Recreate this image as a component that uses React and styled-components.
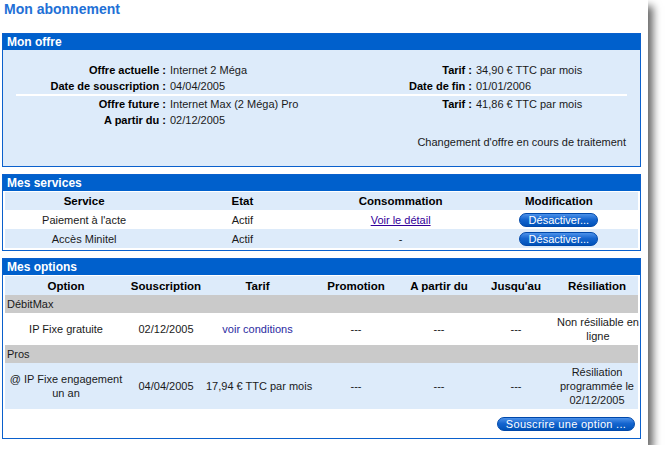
import React from 'react';
import styled, { createGlobalStyle } from 'styled-components';

const GlobalStyle = createGlobalStyle`
  html, body {
    margin: 0;
    padding: 0;
    background: #fff;
  }
  body {
    font-family: "Liberation Sans", Arial, sans-serif;
    font-size: 11px;
    color: #1a1a1a;
  }
`;

const Frame = styled.div`
  width: 648px;
  height: 445px;
  box-sizing: border-box;
  padding: 1px 0 0 2px;
  background: #fff;
  box-shadow: 5px 6px 8px rgba(0, 0, 0, 0.6);
`;

const Title = styled.h1`
  margin: 0 0 16px 2px;
  height: 16px;
  line-height: 16px;
  font-size: 14px;
  font-weight: bold;
  color: #2270d6;
`;

const Panel = styled.section`
  width: 639px;
  box-sizing: border-box;
  border: 1px solid #0a60cc;
  background: ${(p) => (p.$tint ? '#ddebfa' : '#fff')};
  margin-bottom: 7px;
`;

const PanelTitle = styled.h2`
  margin: 0;
  height: 16px;
  line-height: 16px;
  padding-left: 4px;
  background: #0060cc;
  color: #fff;
  font-size: 12px;
  font-weight: bold;
`;

/* Mon offre */
const OfferBody = styled.div`
  padding: 12px 0 16px;
`;

const OfferGrid = styled.div`
  display: grid;
  grid-template-columns: 163px 170px 128px 1fr;
  column-gap: 4px;
  grid-auto-rows: 16px;
  line-height: 16px;
`;

const Label = styled.span`
  text-align: right;
  font-weight: bold;
  color: #000;
  white-space: nowrap;
`;

const Value = styled.span`
  white-space: nowrap;
`;

const Divider = styled.div`
  height: 2px;
  margin: 0 13px;
  background: #fff;
`;

const Note = styled.div`
  margin-top: 6px;
  height: 16px;
  line-height: 16px;
  text-align: right;
  padding-right: 14px;
`;

/* Tables */
const TableBody = styled.div`
  padding: 1px 2px ${(p) => (p.$flush ? 0 : 2)}px;
`;

const Row = styled.div`
  display: grid;
  grid-template-columns: ${(p) => p.$cols};
  align-items: center;
  min-height: ${(p) => p.$h || 19}px;
  background: ${(p) => (p.$tint ? '#ddebfa' : '#fff')};
  line-height: 14px;
`;

const HeadCell = styled.div`
  text-align: center;
  font-weight: bold;
  font-size: 11.5px;
  color: #000;
`;

const Cell = styled.div`
  text-align: center;
  padding: 2px 1px;
  white-space: ${(p) => (p.$nowrap ? 'nowrap' : 'normal')};
`;

const GroupRow = styled.div`
  background: #cacaca;
  height: 18px;
  line-height: 18px;
  padding-left: 2px;
`;

const DetailLink = styled.a`
  color: ${(p) => (p.$plain ? '#2a2aa0' : '#330099')};
  text-decoration: ${(p) => (p.$plain ? 'none' : 'underline')};
  cursor: pointer;
`;

const PillButton = styled.button`
  display: inline-block;
  height: 14px;
  width: ${(p) => p.$w}px;
  padding: 0;
  border: 1px solid #0048aa;
  border-radius: 8px;
  background: linear-gradient(#4d92ea 0%, #1565cf 45%, #0052b8 100%);
  color: #fff;
  font-family: "Liberation Sans", Arial, sans-serif;
  font-size: 11px;
  line-height: 12px;
  letter-spacing: ${(p) => p.$ls || 0}px;
  cursor: pointer;
`;

const ButtonBar = styled.div`
  display: flex;
  justify-content: flex-end;
  padding: 8px 5px 7px 0;
`;

const serviceCols = 'repeat(4, 1fr)';
const optionCols = '122px 78px 105px 92px 74px 80px 1fr';

const services = [
  { name: "Paiement à l'acte", etat: 'Actif', conso: 'link' },
  { name: 'Accès Minitel', etat: 'Actif', conso: '-' },
];

const options = [
  {
    group: 'DébitMax',
    name: ['IP Fixe gratuite'],
    date: '02/12/2005',
    tarif: 'link',
    resil: ['Non résiliable en', 'ligne'],
    h: 32,
  },
  {
    group: 'Pros',
    name: ['@ IP Fixe engagement', 'un an'],
    date: '04/04/2005',
    tarif: '17,94 € TTC par mois',
    resil: ['Résiliation', 'programmée le', '02/12/2005'],
    h: 46,
    tint: true,
  },
];

const Lines = ({ lines }) =>
  lines.map((l, i) => (
    <React.Fragment key={l}>
      {i > 0 && <br />}
      {l}
    </React.Fragment>
  ));

export default function App() {
  return (
    <>
      <GlobalStyle />
      <Frame>
        <Title>Mon abonnement</Title>

        <Panel $tint>
          <PanelTitle>Mon offre</PanelTitle>
          <OfferBody>
            <OfferGrid>
              <Label>Offre actuelle :</Label>
              <Value>Internet 2 Méga</Value>
              <Label>Tarif :</Label>
              <Value>34,90 € TTC par mois</Value>
              <Label>Date de souscription :</Label>
              <Value>04/04/2005</Value>
              <Label>Date de fin :</Label>
              <Value>01/01/2006</Value>
            </OfferGrid>
            <Divider />
            <OfferGrid>
              <Label>Offre future :</Label>
              <Value>Internet Max (2 Méga) Pro</Value>
              <Label>Tarif :</Label>
              <Value>41,86 € TTC par mois</Value>
              <Label>A partir du :</Label>
              <Value>02/12/2005</Value>
            </OfferGrid>
            <Note>Changement d'offre en cours de traitement</Note>
          </OfferBody>
        </Panel>

        <Panel>
          <PanelTitle>Mes services</PanelTitle>
          <TableBody>
            <Row $cols={serviceCols} $h={18} $tint>
              <HeadCell>Service</HeadCell>
              <HeadCell>Etat</HeadCell>
              <HeadCell>Consommation</HeadCell>
              <HeadCell>Modification</HeadCell>
            </Row>
            {services.map((s, i) => (
              <Row key={s.name} $cols={serviceCols} $tint={i % 2 === 1}>
                <Cell>{s.name}</Cell>
                <Cell>{s.etat}</Cell>
                <Cell>
                  {s.conso === 'link' ? <DetailLink>Voir le détail</DetailLink> : s.conso}
                </Cell>
                <Cell>
                  <PillButton $w={79}>Désactiver...</PillButton>
                </Cell>
              </Row>
            ))}
          </TableBody>
        </Panel>

        <Panel>
          <PanelTitle>Mes options</PanelTitle>
          <TableBody $flush>
            <Row $cols={optionCols} $tint>
              <HeadCell>Option</HeadCell>
              <HeadCell>Souscription</HeadCell>
              <HeadCell>Tarif</HeadCell>
              <HeadCell>Promotion</HeadCell>
              <HeadCell>A partir du</HeadCell>
              <HeadCell>Jusqu'au</HeadCell>
              <HeadCell>Résiliation</HeadCell>
            </Row>
            {options.map((o) => (
              <React.Fragment key={o.group}>
                <GroupRow>{o.group}</GroupRow>
                <Row $cols={optionCols} $h={o.h} $tint={o.tint}>
                  <Cell $nowrap>
                    <Lines lines={o.name} />
                  </Cell>
                  <Cell>{o.date}</Cell>
                  <Cell $nowrap>
                    {o.tarif === 'link' ? <DetailLink $plain>voir conditions</DetailLink> : o.tarif}
                  </Cell>
                  <Cell>---</Cell>
                  <Cell>---</Cell>
                  <Cell>---</Cell>
                  <Cell $nowrap>
                    <Lines lines={o.resil} />
                  </Cell>
                </Row>
              </React.Fragment>
            ))}
          </TableBody>
          <ButtonBar>
            <PillButton $w={138} $ls={0.3}>Souscrire une option ...</PillButton>
          </ButtonBar>
        </Panel>
      </Frame>
    </>
  );
}
